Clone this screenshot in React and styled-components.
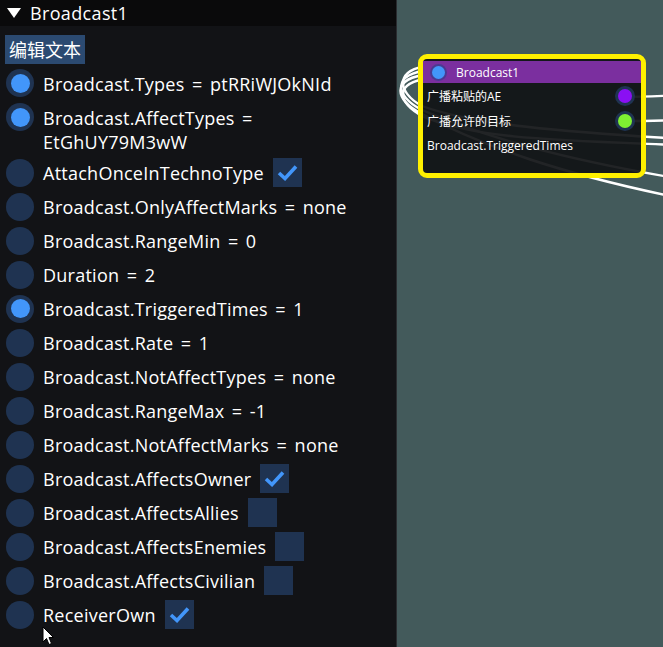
import React from 'react'
import styled, { createGlobalStyle } from 'styled-components'

const GlobalStyle = createGlobalStyle`
   *, *::before, *::after { box-sizing: border-box; }
   html, body {
      margin: 0;
      padding: 0;
      background: #435a5b;
   }
   body {
      font-family: 'Open Sans', 'Noto Sans CJK SC', sans-serif;
      color: #fff;
   }
`

const Page = styled.div`
   display: flex;
   width: 663px;
   height: 647px;
   overflow: hidden;
`

const Panel = styled.aside`
   position: relative;
   z-index: 1;
   flex: none;
   width: 397px;
   display: flex;
   flex-direction: column;
   background: #121316;
   border-right: 1px solid #2a2c30;
`

const Header = styled.div`
   display: flex;
   align-items: center;
   gap: 9px;
   height: 26px;
   padding-left: 7px;
   background: #0a0a0b;
   font-size: 18px;
   letter-spacing: 0.35px;
`

const Triangle = styled.span`
   width: 0;
   height: 0;
   border-left: 7.5px solid transparent;
   border-right: 7.5px solid transparent;
   border-top: 10px solid #fff;
`

const Body = styled.div`
   display: flex;
   flex-direction: column;
   align-items: flex-start;
   gap: 5px;
   padding: 9px 0 0 5px;
`

const EditButton = styled.button`
   height: 29px;
   padding: 0 4px;
   border: none;
   background: #2b4a71;
   color: #fff;
   font-family: 'Noto Sans CJK SC', sans-serif;
   font-size: 18px;
   line-height: 29px;
`

const Row = styled.div`
   display: flex;
   align-items: flex-start;
   min-height: 29px;
`

const Radio = styled.span`
   flex: none;
   display: flex;
   align-items: center;
   justify-content: center;
   width: 28px;
   height: 28px;
   margin: 0 9px 0 1px;
   border-radius: 50%;
   background: #1f3351;
   &::after {
      content: '';
      width: 19px;
      height: 19px;
      border-radius: 50%;
      background: ${(p) => (p.$on ? '#4296fa' : 'transparent')};
   }
`

const Label = styled.span`
   font-size: 18px;
   line-height: 24px;
   padding-top: 2.5px;
   letter-spacing: 0.25px;
   word-spacing: 2.5px;
   white-space: pre;
`

const Check = styled.span`
   flex: none;
   display: flex;
   align-items: center;
   justify-content: center;
   width: 29px;
   height: 29px;
   margin: -1px 0 0 9px;
   background: #1f3351;
`

const Cursor = styled.svg`
   position: absolute;
   left: 42px;
   top: 626px;
`

const Canvas = styled.main`
   position: relative;
   flex: 1;
   background: #435a5b;
`

const Wires = styled.svg`
   position: absolute;
   left: -397px;
   top: 0;
`

const Node = styled.div`
   position: absolute;
   left: 21px;
   top: 54px;
   width: 228px;
   height: 124px;
   padding-top: 2px;
   border: 5px solid #fff000;
   border-radius: 9px;
   background: rgba(17, 19, 22, 0.93);
   font-size: 12px;
`

const NodeTitle = styled.div`
   display: flex;
   align-items: center;
   gap: 9px;
   height: 22px;
   padding-left: 7px;
   background: #7b2f9f;
`

const TitleDot = styled.span`
   display: flex;
   align-items: center;
   justify-content: center;
   width: 17px;
   height: 17px;
   border-radius: 50%;
   background: #4a3a92;
   &::after {
      content: '';
      width: 13px;
      height: 13px;
      border-radius: 50%;
      background: #4296fa;
   }
`

const NodeRow = styled.div`
   display: flex;
   align-items: center;
   justify-content: space-between;
   height: 25px;
   padding: 0 6px 0 4px;
`

const Pin = styled.span`
   display: flex;
   align-items: center;
   justify-content: center;
   width: 20px;
   height: 20px;
   border-radius: 50%;
   background: #1f3351;
   &::after {
      content: '';
      width: 14px;
      height: 14px;
      border-radius: 50%;
      background: ${(p) => p.$color};
   }
`

const rows = [
   { text: 'Broadcast.Types = ptRRiWJOkNId', on: true },
   { text: 'Broadcast.AffectTypes =\nEtGhUY79M3wW', on: true },
   { text: 'AttachOnceInTechnoType', check: true },
   { text: 'Broadcast.OnlyAffectMarks = none' },
   { text: 'Broadcast.RangeMin = 0' },
   { text: 'Duration = 2' },
   { text: 'Broadcast.TriggeredTimes = 1', on: true },
   { text: 'Broadcast.Rate = 1' },
   { text: 'Broadcast.NotAffectTypes = none' },
   { text: 'Broadcast.RangeMax = -1' },
   { text: 'Broadcast.NotAffectMarks = none' },
   { text: 'Broadcast.AffectsOwner', check: true },
   { text: 'Broadcast.AffectsAllies', check: false },
   { text: 'Broadcast.AffectsEnemies', check: false },
   { text: 'Broadcast.AffectsCivilian', check: false },
   { text: 'ReceiverOwn', check: true },
]

// loops leave the node on the left and run under it to the right edge
const links = [
   'M430 66 C 395 68, 396 92, 422 106 C 470 124, 560 132, 700 140',
   'M430 70 C 392 73, 394 96, 422 110 C 480 135, 560 160, 700 182',
   'M430 74 C 390 78, 394 100, 422 114 C 480 145, 560 175, 700 202',
   'M430 78 C 392 83, 398 103, 424 117 C 480 140, 560 140, 700 146',
]

const Tick = () => (
   <svg width='21' height='17' viewBox='0 0 21 17'>
      <path d='M2 9 L8 14.5 L19 2.5' fill='none' stroke='#4296fa' strokeWidth='3.6' />
   </svg>
)

const App = () => (
   <>
      <GlobalStyle />
      <Page>
         <Panel>
            <Header>
               <Triangle />
               <span>Broadcast1</span>
            </Header>
            <Body>
               <EditButton>编辑文本</EditButton>
               {rows.map((r) => (
                  <Row key={r.text}>
                     <Radio $on={r.on} />
                     <Label>{r.text}</Label>
                     {r.check !== undefined && <Check>{r.check && <Tick />}</Check>}
                  </Row>
               ))}
            </Body>
            <Cursor width='13' height='20' viewBox='0 0 13 20'>
               <path d='M1 1 L1 16 L4.5 12.5 L7 18.5 L9.5 17.5 L7 11.5 L11.5 11.5 Z' fill='#fff' stroke='#000' strokeWidth='1' />
            </Cursor>
         </Panel>
         <Canvas>
            <Wires width='663' height='647' viewBox='0 0 663 647'>
               <g fill='none' stroke='#fff' strokeWidth='2.4'>
                  {links.map((d) => (
                     <path key={d} d={d} />
                  ))}
                  <path d='M625 97 C 650 97, 680 95, 700 94' />
                  <path d='M625 121 C 650 121, 680 120, 700 119' />
               </g>
            </Wires>
            <Node>
               <NodeTitle>
                  <TitleDot />
                  <span>Broadcast1</span>
               </NodeTitle>
               <NodeRow>
                  <span>广播粘贴的AE</span>
                  <Pin $color='#8a10f3' />
               </NodeRow>
               <NodeRow>
                  <span>广播允许的目标</span>
                  <Pin $color='#7ff032' />
               </NodeRow>
               <NodeRow>
                  <span>Broadcast.TriggeredTimes</span>
               </NodeRow>
            </Node>
         </Canvas>
      </Page>
   </>
)

export default App
